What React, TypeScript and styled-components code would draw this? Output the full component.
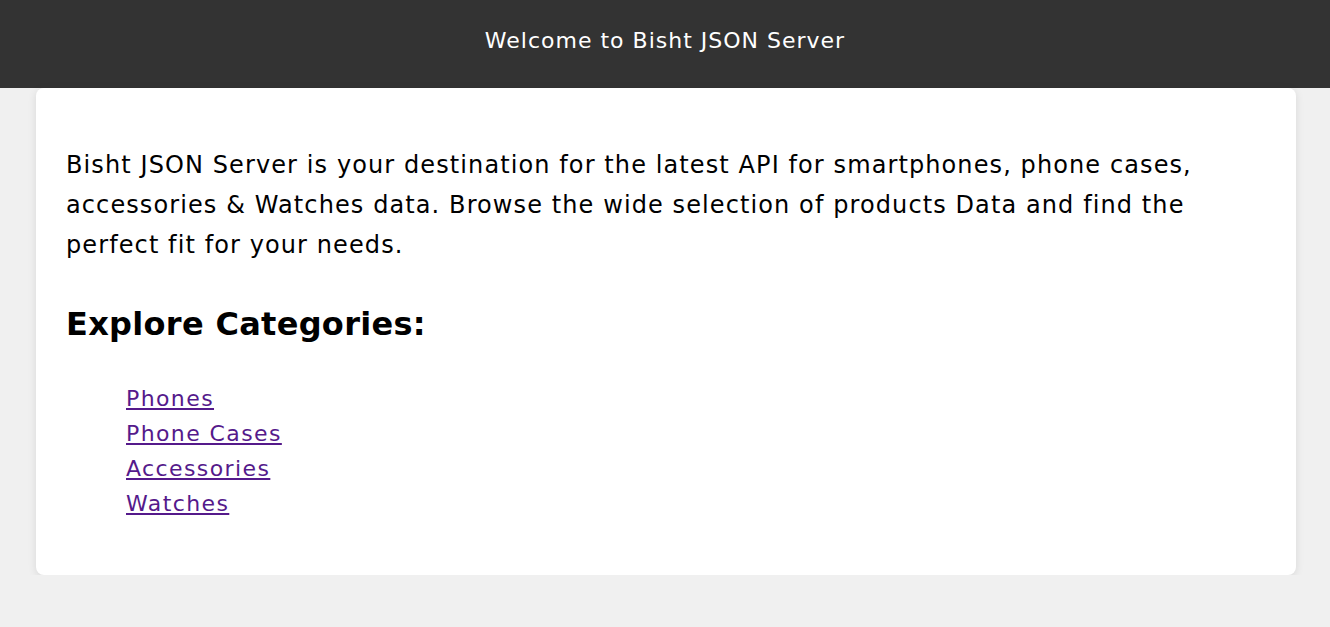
import React from "react";
import styled, { createGlobalStyle } from "styled-components";

const Global = createGlobalStyle`
  html, body { margin: 0; padding: 0; }
  body {
    background: #f0f0f0;
    font-family: "DejaVu Sans", "Noto Sans", sans-serif;
    color: #000;
  }
`;

const Header = styled.header`
  height: 88px;
  box-sizing: border-box;
  padding-bottom: 6px;
  background: #333333;
  display: flex;
  align-items: center;
  justify-content: center;
`;

const Title = styled.h1`
  margin: 0;
  color: #ffffff;
  font-size: 22px;
  letter-spacing: 1px;
  font-weight: 400;
  line-height: 1;
`;

const Card = styled.main`
  margin: 0 34px 0 36px;
  background: #ffffff;
  border-radius: 8px;
  box-shadow: 0 2px 8px rgba(0, 0, 0, 0.1);
  padding: 57px 30px 54px;
`;

const Intro = styled.p`
  margin: 0;
  font-size: 24px;
  letter-spacing: 1.1px;
  line-height: 40px;
`;

const Heading = styled.h2`
  margin: 35px 0 0;
  font-size: 32px;
  letter-spacing: 0.3px;
  font-weight: 700;
  line-height: 48px;
`;

const List = styled.ul`
  list-style: none;
  margin: 33px 0 0;
  padding: 0 0 0 60px;
`;

const Item = styled.li`
  font-size: 22px;
  letter-spacing: 1.4px;
  line-height: 35px;
`;

const Link = styled.a`
  color: #551a8b;
  text-decoration: underline;
`;

const categories = ["Phones", "Phone Cases", "Accessories", "Watches"];

export default function App() {
  return (
    <>
      <Global />
      <Header>
        <Title>Welcome to Bisht JSON Server</Title>
      </Header>
      <Card>
        <Intro>
          Bisht JSON Server is your destination for the latest API for smartphones, phone cases,
          accessories &amp; Watches data. Browse the wide selection of products Data and find the
          perfect fit for your needs.
        </Intro>
        <Heading>Explore Categories:</Heading>
        <List>
          {categories.map((c) => (
            <Item key={c}>
              <Link href="#">{c}</Link>
            </Item>
          ))}
        </List>
      </Card>
    </>
  );
}
